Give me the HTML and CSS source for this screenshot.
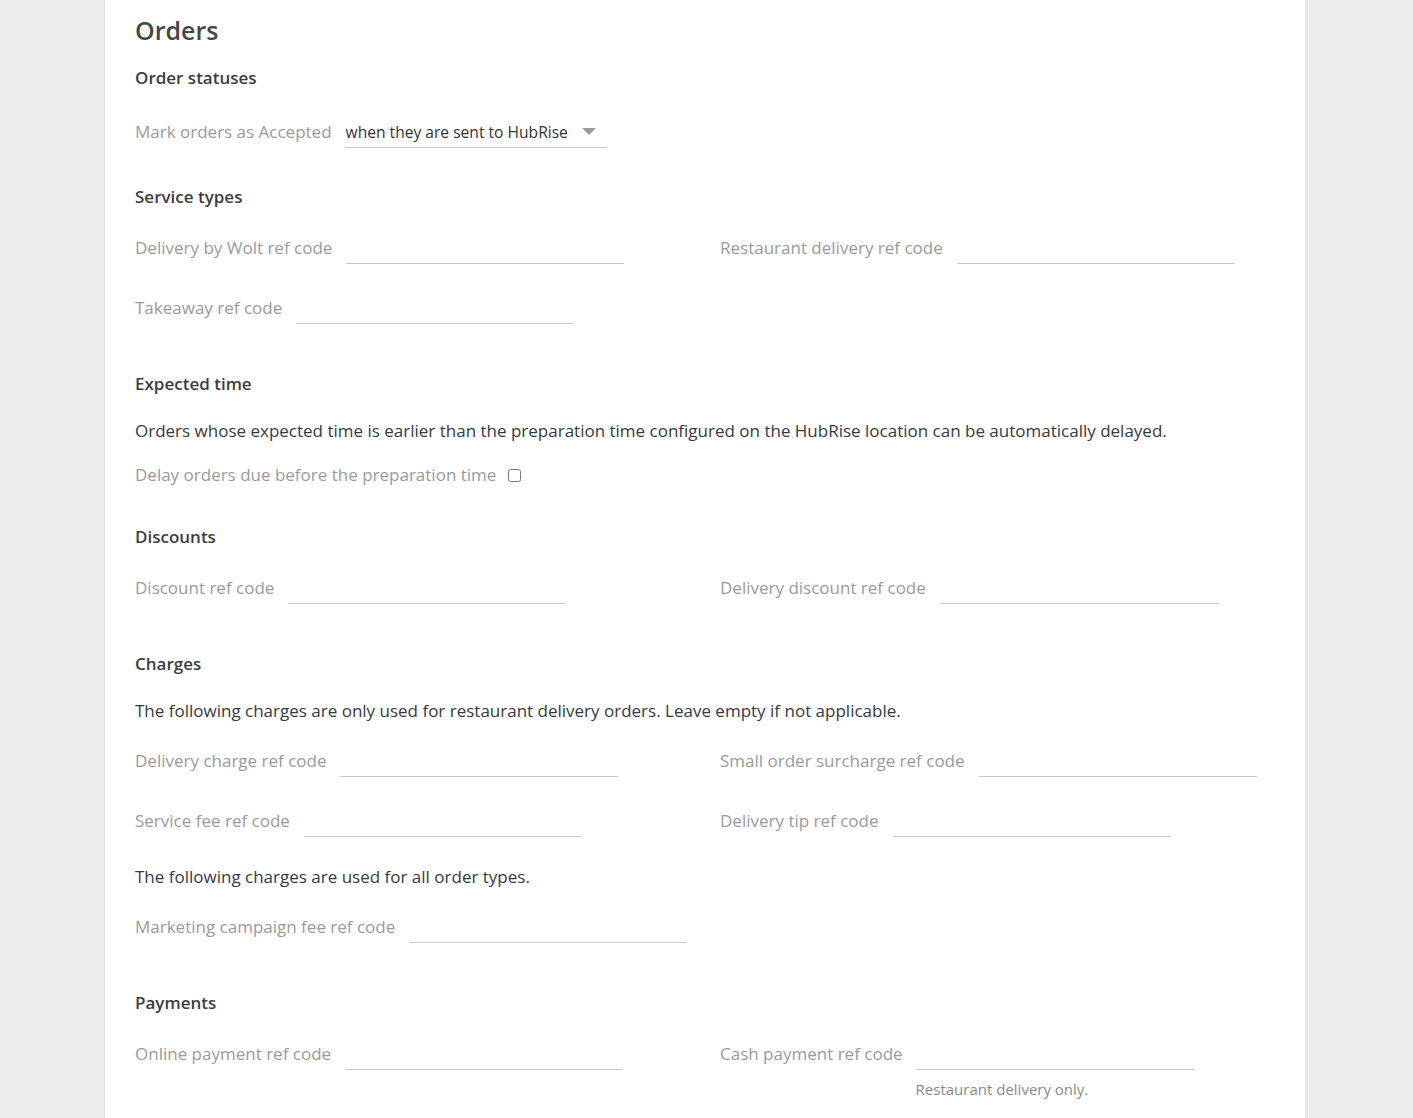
FILE: index.html
```html
<!DOCTYPE html>
<html lang="en">
<head>
    <meta charset="UTF-8">
    <meta name="viewport" content="width=device-width, initial-scale=1.0">
    <title>Orders - Settings</title>
    <link rel="stylesheet" href="styles.css">
</head>
<body>

<div class="card">
    <h1 class="page-title">Orders</h1>

    <!-- Order statuses -->
    <section class="section section--first">
        <h2 class="section-title">Order statuses</h2>
        <div class="field">
            <label class="field-label">Mark orders as Accepted</label>
            <div class="select">
                <span class="select-value">when they are sent to HubRise</span>
                <span class="select-arrow"></span>
            </div>
        </div>
    </section>

    <!-- Service types -->
    <section class="section section--after-select">
        <h2 class="section-title">Service types</h2>
        <div class="field-grid">
            <div class="field">
                <label class="field-label">Delivery by Wolt ref code</label>
                <input type="text" class="field-input">
            </div>
            <div class="field">
                <label class="field-label">Restaurant delivery ref code</label>
                <input type="text" class="field-input">
            </div>
            <div class="field">
                <label class="field-label">Takeaway ref code</label>
                <input type="text" class="field-input">
            </div>
        </div>
    </section>

    <!-- Expected time -->
    <section class="section">
        <h2 class="section-title">Expected time</h2>
        <p class="section-text section-text--tight">Orders whose expected time is earlier than the preparation time configured on the HubRise location can be automatically delayed.</p>
        <div class="field field--check">
            <label class="field-label">Delay orders due before the preparation time</label>
            <input type="checkbox" class="field-checkbox">
        </div>
    </section>

    <!-- Discounts -->
    <section class="section section--after-check">
        <h2 class="section-title">Discounts</h2>
        <div class="field-grid">
            <div class="field">
                <label class="field-label">Discount ref code</label>
                <input type="text" class="field-input">
            </div>
            <div class="field">
                <label class="field-label">Delivery discount ref code</label>
                <input type="text" class="field-input">
            </div>
        </div>
    </section>

    <!-- Charges -->
    <section class="section">
        <h2 class="section-title">Charges</h2>
        <p class="section-text">The following charges are only used for restaurant delivery orders. Leave empty if not applicable.</p>
        <div class="field-grid field-grid--spaced">
            <div class="field">
                <label class="field-label">Delivery charge ref code</label>
                <input type="text" class="field-input">
            </div>
            <div class="field">
                <label class="field-label">Small order surcharge ref code</label>
                <input type="text" class="field-input">
            </div>
            <div class="field">
                <label class="field-label">Service fee ref code</label>
                <input type="text" class="field-input">
            </div>
            <div class="field">
                <label class="field-label">Delivery tip ref code</label>
                <input type="text" class="field-input">
            </div>
        </div>
        <p class="section-text">The following charges are used for all order types.</p>
        <div class="field-grid">
            <div class="field">
                <label class="field-label">Marketing campaign fee ref code</label>
                <input type="text" class="field-input">
            </div>
        </div>
    </section>

    <!-- Payments -->
    <section class="section">
        <h2 class="section-title">Payments</h2>
        <div class="field-grid">
            <div class="field">
                <label class="field-label">Online payment ref code</label>
                <input type="text" class="field-input">
            </div>
            <div class="field field--help">
                <label class="field-label">Cash payment ref code</label>
                <input type="text" class="field-input">
                <div class="field-help">Restaurant delivery only.</div>
            </div>
        </div>
    </section>
</div>

</body>
</html>
```

FILE: styles.css
```css
body {
    margin: 0;
    padding: 0;
    font-family: "Open Sans", Arial, sans-serif;
    background: #ebebeb;
    color: #363a3f;
    height: 100vh;
    overflow: hidden;
}

.card {
    box-sizing: border-box;
    width: 1202px;
    min-height: 100vh;
    margin: 0 0 0 104px;
    padding: 14px 30px 0;
    background: #fff;
    border-left: 1px solid #dedede;
    border-right: 1px solid #dedede;
}

.page-title {
    margin: 0;
    font-size: 25px;
    line-height: 32px;
    font-weight: 600;
    color: #474747;
}

.section {
    margin-top: 48px;
}

.section--first {
    margin-top: 20px;
}

.section--first .section-title {
    margin-bottom: 26px;
}

.section--after-select {
    margin-top: 37px;
}

.section--after-check {
    margin-top: 38px;
}

.section-title {
    margin: 0 0 23px;
    font-size: 17px;
    line-height: 24px;
    font-weight: 600;
    color: #3d3d3d;
}

.section-text {
    margin: 0 0 22px;
    font-size: 17px;
    line-height: 24px;
}

.section-text--tight {
    margin-bottom: 20px;
}

/* Two column grid of ref code fields */
.field-grid {
    display: grid;
    grid-template-columns: 1fr 1fr;
    column-gap: 30px;
    row-gap: 28px;
}

.field-grid--spaced {
    margin-bottom: 28px;
}

.field {
    display: flex;
    align-items: center;
    height: 32px;
}

.field-label {
    font-size: 17px;
    line-height: 30px;
    color: #9a9a9a;
    white-space: nowrap;
}

.field-input {
    box-sizing: border-box;
    width: 278px;
    height: 32px;
    margin-left: 14px;
    padding: 0 2px;
    border: none;
    border-bottom: 1px solid #c8c8c8;
    font-family: inherit;
    font-size: 16px;
    color: #333;
    outline: none;
    background: transparent;
}

/* Select with underline */
.select {
    box-sizing: border-box;
    width: 262px;
    height: 32px;
    margin-left: 13px;
    padding: 0 11px 0 1px;
    display: flex;
    align-items: center;
    justify-content: space-between;
    border-bottom: 1px solid #c8c8c8;
}

.select-value {
    font-size: 15.6px;
    line-height: 30px;
    color: #333;
}

.select-arrow {
    width: 0;
    height: 0;
    border-left: 7px solid transparent;
    border-right: 7px solid transparent;
    border-top: 7px solid #9a9a9a;
}

.field--check {
    height: 24px;
}

.field-checkbox {
    width: 13px;
    height: 13px;
    margin: 0 0 0 12px;
}

/* Field with a help line under the input */
.field--help {
    display: grid;
    grid-template-columns: max-content 278px;
    align-items: center;
    height: auto;
}

.field--help .field-label,
.field--help .field-input {
    grid-row: 1;
}

.field--help .field-input {
    margin-left: 13px;
}

.field-help {
    grid-column: 2;
    margin: 9px 0 0 13px;
    font-size: 15px;
    line-height: 20px;
    color: #8a8a8a;
}
```
